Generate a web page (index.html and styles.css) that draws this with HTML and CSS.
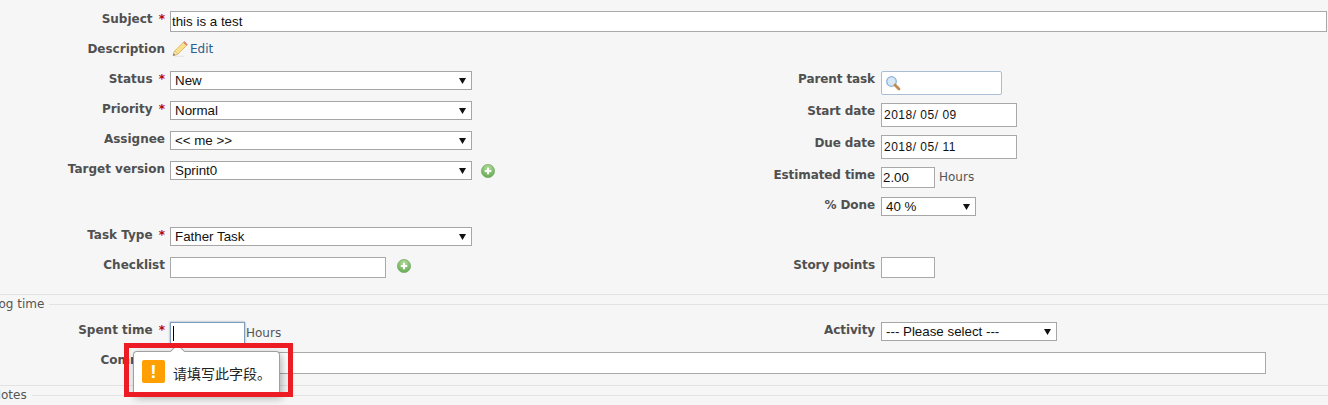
FILE: index.html
```html
<!DOCTYPE html>
<html lang="en">
<head>
<meta charset="utf-8">
<title>Edit issue</title>
<link rel="stylesheet" href="styles.css">
</head>
<body>
<form class="form">
  <div class="row row-subject">
    <label class="lbl">Subject <span class="req">*</span></label>
    <input class="inp inp-subject" type="text" value="this is a test">
  </div>
  <div class="row row-desc">
    <label class="lbl">Description</label>
    <svg class="pencil" width="16" height="16" viewBox="0 0 16 16">
      <path d="M3 15.4 L12 15.4" stroke="#e8e8e2" stroke-width="1.4"/>
      <path d="M1.2 14.6 L2.6 10 L11.4 1.4 L14.6 4.4 L5.8 13.2 Z" fill="#f8e08e" stroke="#dcb45c" stroke-width="0.9" stroke-linejoin="round"/>
      <path d="M11.4 1.4 L12.6 0.6 L15.4 3.4 L14.6 4.4 Z" fill="#e58f80" stroke="#cf7a68" stroke-width="0.6"/>
      <path d="M1.2 14.6 L2.6 10 L5.8 13.2 Z" fill="#f7ecc8" stroke="#cdb06a" stroke-width="0.6"/>
      <path d="M1.2 14.6 L1.8 12.6 L3.2 14 Z" fill="#6b5a3a"/>
    </svg>
    <a class="edit" href="#">Edit</a>
  </div>
  <div class="split">
    <div class="col-left">
      <div class="row r30"><label class="lbl">Status <span class="req">*</span></label><select class="sel sel-wide"><option>New</option></select></div>
      <div class="row r30"><label class="lbl">Priority <span class="req">*</span></label><select class="sel sel-wide"><option>Normal</option></select></div>
      <div class="row r30"><label class="lbl">Assignee</label><select class="sel sel-wide"><option>&lt;&lt; me &gt;&gt;</option></select></div>
      <div class="row r66"><label class="lbl">Target version</label><select class="sel sel-wide"><option>Sprint0</option></select>
        <svg class="plus" width="16" height="16" viewBox="0 0 16 16"><use href="#plus-icon"/></svg></div>
      <div class="row r30"><label class="lbl">Task Type <span class="req">*</span></label><select class="sel sel-wide"><option>Father Task</option></select></div>
      <div class="row"><label class="lbl">Checklist</label><input class="inp inp-check" type="text">
        <svg class="plus plus-check" width="16" height="16" viewBox="0 0 16 16">
          <defs><radialGradient id="g" cx="50%" cy="30%" r="70%"><stop offset="0" stop-color="#b7e0a0"/><stop offset="1" stop-color="#62a851"/></radialGradient>
          <g id="plus-icon"><circle cx="8" cy="8" r="6.6" fill="url(#g)" stroke="#7fb071" stroke-width="0.8"/><path d="M8 4.8V11.2M4.8 8H11.2" stroke="#fff" stroke-width="2"/></g></defs>
          <use href="#plus-icon"/>
        </svg></div>
    </div>
    <div class="col-right">
      <div class="row r32"><label class="lbl lbl-r">Parent task</label>
        <span class="inp inp-parent"><svg width="16" height="16" viewBox="0 0 16 16"><circle cx="6.5" cy="6.5" r="4.8" fill="#d6e8f8" stroke="#8fb2d4" stroke-width="1.3"/><path d="M10 10 L14 14" stroke="#c08a4e" stroke-width="2.8" stroke-linecap="round"/></svg></span></div>
      <div class="row r32"><label class="lbl lbl-r">Start date</label><input class="inp inp-date" type="text" value="2018/ 05/ 09"></div>
      <div class="row r32"><label class="lbl lbl-r">Due date</label><input class="inp inp-date" type="text" value="2018/ 05/ 11"></div>
      <div class="row r30"><label class="lbl lbl-r">Estimated time</label><input class="inp inp-small" type="text" value="2.00"><span class="unit">Hours</span></div>
      <div class="row r60"><label class="lbl lbl-r">% Done</label><select class="sel sel-done"><option>40 %</option></select></div>
      <div class="row"><label class="lbl lbl-r">Story points</label><input class="inp inp-small" type="text"></div>
    </div>
  </div>
  <fieldset class="group group-log">
    <legend class="legend">Log time</legend>
    <div class="split">
      <div class="col-left">
        <div class="row"><label class="lbl">Spent time <span class="req">*</span></label><input class="inp inp-spent" type="text"><span class="unit unit-spent">Hours</span></div>
      </div>
      <div class="col-right">
        <div class="row"><label class="lbl lbl-r">Activity</label><select class="sel sel-activity"><option>--- Please select ---</option></select></div>
      </div>
    </div>
    <div class="row row-comment"><label class="lbl">Comment</label><input class="inp inp-comment" type="text"></div>
  </fieldset>
  <fieldset class="group group-notes">
    <legend class="legend legend-notes">Notes</legend>
  </fieldset>
</form>
<div class="bubble">
  <span class="bubble-arrow"></span>
  <span class="warn">!</span>
  <span class="bubble-text">请填写此字段。</span>
</div>
<div class="redbox"></div>
</body>
</html>
```
FILE: styles.css
```css
html, body { margin: 0; padding: 0; height: 405px; overflow: hidden; }
body { background: #f6f6f6; color: #484848; font: 12px "DejaVu Sans", Verdana, sans-serif; position: relative; }
.form { padding-top: 11px; }
.row { display: flex; align-items: flex-start; }
.r30 { height: 30px; }
.r32 { height: 32px; }
.r60 { height: 60px; }
.r66 { height: 66px; }
.lbl { width: 165px; flex: none; text-align: right; font-weight: bold; font-size: 12px; line-height: 14px; margin: 1px 5px 0 0; color: #505050; }
.lbl-r { width: 211px; margin-right: 6px; letter-spacing: -0.1px; }
.req { color: #bb0000; margin-left: 2px; }
.row-subject { height: 30px; }
.row-desc { height: 30px; }
.inp { box-sizing: border-box; border: 1px solid #a9a9a9; background: #fff; padding: 0 1px; margin: 0; font: 12px "Liberation Sans", Arial, sans-serif; color: #111; border-radius: 0; outline: none; display: block; }
.inp-subject { width: 1157px; height: 21px; font-size: 13.33px; }
.pencil { margin: 0 2px 0 2px; flex: none; }
.edit { color: #2a5f8f; text-decoration: none; font-size: 12px; line-height: 16px; }
.split { display: flex; }
.col-left { width: 664px; flex: none; }
.col-right { flex: 1; }
.sel { appearance: none; -webkit-appearance: none; box-sizing: border-box; height: 19px; margin: 0; border: 1px solid #a6a6a6; border-radius: 0; padding: 0 0 0 4px; font: 13.33px "Liberation Sans", Arial, sans-serif; color: #111; background: #fff url("data:image/svg+xml,%3Csvg xmlns='http://www.w3.org/2000/svg' width='7' height='6'%3E%3Cpath d='M0 0H7L3.5 6Z' fill='%23111'/%3E%3C/svg%3E") no-repeat right 5px center; display: block; }
.sel-wide { width: 302px; }
.sel-done { width: 95px; }
.sel-activity { width: 176px; }
.plus { margin: 2px 0 0 8px; flex: none; }
.plus-check { margin-top: 1px; margin-left: 10px; }
.inp-check { width: 216px; height: 21px; }
.inp-parent { width: 121px; height: 24px; border-color: #a9bed3; border-radius: 2px; padding: 3px 0 0 3px; }
.inp-parent svg { display: block; }
.inp-date { width: 136px; height: 24px; padding-left: 2px; font-size: 12px; letter-spacing: 0.5px; }
.inp-small { width: 54px; height: 21px; font-size: 13.33px; }
.unit { margin-left: 4px; line-height: 20px; color: #555; font-size: 12px; }
.group { border: 0; border-top: 1px solid #e3e3e3; margin: 0; padding: 0; min-width: 0; position: relative; }
.group-log { margin-top: 16px; height: 90px; }
.group-log::before, .group-notes::before { content: ""; display: block; border-top: 1px solid #e3e3e3; margin-top: 9px; }
.legend { position: absolute; left: -8px; top: 2px; padding: 0 5px 0 0; background: #f6f6f6; font-size: 12px; line-height: 14px; color: #555; float: none; }
.legend-notes { left: -8px; }
.group-log .split { margin-top: 17px; }
.inp-spent { width: 75px; height: 22px; border-color: #7f9db9; box-shadow: 0 0 2px #7f9db9; background: #fff linear-gradient(#000, #000) no-repeat 2px center / 1px 15px; }
.unit-spent { margin-left: 1px; line-height: 22px; }
.row-comment { margin-top: 8px; }
.inp-comment { width: 1096px; height: 22px; }
.bubble { position: absolute; left: 133px; top: 351px; width: 147px; height: 44px; box-sizing: border-box; background: #fff; border: 1px solid #a0a0a0; border-bottom: 0; border-radius: 4px 4px 0 0; box-shadow: 2px 3px 8px rgba(0,0,0,.3); display: flex; align-items: flex-start; padding: 8px 0 0 8px; }
.bubble-arrow { position: absolute; left: 38px; top: -6px; width: 10px; height: 10px; background: #fff; border: 1px solid #a0a0a0; border-right: 0; border-bottom: 0; transform: rotate(45deg); }
.warn { width: 23px; height: 23px; background: #ff9f00; border-radius: 2px; color: #fff; font: bold 19px/23px "Liberation Sans", Arial, sans-serif; text-align: center; flex: none; }
.bubble-text { margin-left: 8px; font: 14px/27px "Noto Sans CJK SC", sans-serif; color: #222; white-space: nowrap; }
.redbox { position: absolute; left: 124px; top: 343px; width: 169px; height: 54px; box-sizing: border-box; border: 5px solid #ed1c24; }
```
